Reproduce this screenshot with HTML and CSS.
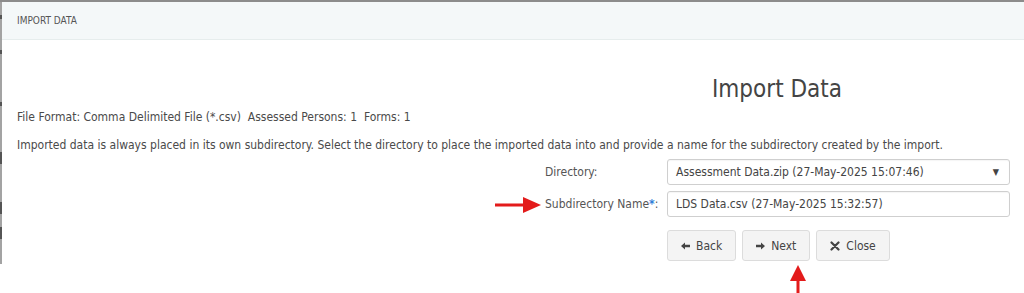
FILE: index.html
```html
<!DOCTYPE html>
<html>
<head>
<meta charset="utf-8">
<link rel="stylesheet" href="styles.css">
</head>
<body>
<div class="screen">
  <div class="edge">
    <span class="mark m1"></span><span class="mark m2"></span><span class="mark m3"></span><span class="mark m4"></span><span class="mark m5"></span><span class="mark m6"></span>
  </div>
  <div class="dialog">
    <div class="dlg-header">IMPORT DATA</div>
    <div class="dlg-body">
      <div class="title">Import Data</div>
      <p class="info">File Format: Comma Delimited File (*.csv)&nbsp; Assessed Persons: 1&nbsp; Forms: 1</p>
      <p class="desc">Imported data is always placed in its own subdirectory. Select the directory to place the imported data into and provide a name for the subdirectory created by the import.</p>
      <div class="form">
        <label class="lbl">Directory:</label>
        <div class="field select">
          <span>Assessment Data.zip (27-May-2025 15:07:46)</span>
          <span class="caret">▼</span>
        </div>
        <label class="lbl subdir">Subdirectory Name<span class="req">*</span>:
          <svg class="red-arrow-right" width="46" height="16" viewBox="0 0 46 16"><rect x="0" y="6.5" width="30" height="3" fill="#e31b1b"/><polygon points="28,0 46,8 28,16" fill="#e31b1b"/></svg>
        </label>
        <div class="field">LDS Data.csv (27-May-2025 15:32:57)</div>
        <div class="buttons">
          <button class="btn"><svg width="9" height="8" viewBox="0 0 9 8"><polygon points="0,4 4,0.5 4,2.8 9,2.8 9,5.2 4,5.2 4,7.5" fill="#444"/></svg>Back</button>
          <button class="btn next"><svg width="9" height="8" viewBox="0 0 9 8"><polygon points="9,4 5,0.5 5,2.8 0,2.8 0,5.2 5,5.2 5,7.5" fill="#444"/></svg>Next
            <svg class="red-arrow-up" width="16" height="30" viewBox="0 0 16 30"><polygon points="8,0 16,16 0,16" fill="#e31b1b"/><rect x="6.5" y="14" width="3" height="16" fill="#e31b1b"/></svg>
          </button>
          <button class="btn"><svg width="10" height="10" viewBox="0 0 10 10"><path d="M1.5 1.5 L8.5 8.5 M8.5 1.5 L1.5 8.5" stroke="#444" stroke-width="2.2" stroke-linecap="round"/></svg>Close</button>
        </div>
      </div>
    </div>
  </div>
</div>
</body>
</html>
```

FILE: styles.css
```css
html, body {
  margin: 0;
  padding: 0;
  background: #ffffff;
}
body {
  font-family: "DejaVu Sans Condensed", "DejaVu Sans", sans-serif;
  color: #4a4a4a;
  width: 1024px;
  height: 293px;
  overflow: hidden;
}
.screen {
  display: flex;
  border-top: 2px solid #8c8c8c;
}
.edge {
  flex: 0 0 2px;
  width: 2px;
  height: 262px;
  background: #a3a3a3;
  position: relative;
}
.mark {
  position: absolute;
  left: 0;
  width: 2px;
  background: #555;
}
.m1 { top: 13px; height: 4px; }
.m2 { top: 48px; height: 4px; }
.m3 { top: 100px; height: 4px; }
.m4 { top: 150px; height: 12px; }
.m5 { top: 200px; height: 12px; }
.m6 { top: 225px; height: 12px; }
.dialog {
  flex: 1;
  background: #fff;
  height: 262px;
}
.dlg-header {
  height: 37px;
  background: #f4f8f9;
  border-bottom: 1px solid #e6eded;
  font-size: 10px;
  line-height: 38px;
  padding-left: 15px;
  color: #555;
}
.dlg-body {
  padding: 0 12px 0 15px;
}
.title {
  margin-top: 35px;
  margin-left: 500px;
  width: 520px;
  text-align: center;
  font-size: 24px;
  line-height: 28px;
  color: #444;
}
.info, .desc {
  margin: 0;
  font-size: 12px;
  line-height: 16px;
}
.info { margin-top: 6px; }
.desc { margin-top: 12px; }
.form {
  margin-top: 6px;
  margin-left: 528px;
  display: grid;
  grid-template-columns: 122px 343px;
  row-gap: 6px;
  align-items: center;
}
.lbl {
  font-size: 12px;
  color: #555;
  position: relative;
}
.req { color: #2f7fd8; font-weight: bold; }
.field {
  height: 24px;
  border: 1px solid #cfcfcf;
  border-radius: 3px;
  box-sizing: content-box;
  display: flex;
  align-items: center;
  padding: 0 8px;
  font-size: 12px;
  color: #444;
  box-shadow: inset 0 1px 1px rgba(0,0,0,0.04);
  width: 325px;
}
.select { justify-content: space-between; }
.caret { font-size: 9px; color: #444; padding-right: 2px; }
.red-arrow-right {
  position: absolute;
  left: -50px;
  top: 0px;
}
.buttons {
  grid-column: 2;
  margin-top: 7px;
  display: flex;
  gap: 6px;
}
.btn {
  height: 31px;
  padding: 0 13px;
  background: #f4f4f4;
  border: 1px solid #dcdcdc;
  border-radius: 3px;
  font-family: inherit;
  font-size: 12px;
  color: #444;
  display: flex;
  align-items: center;
  gap: 6px;
  position: relative;
}
.red-arrow-up {
  position: absolute;
  left: 47px;
  top: 34px;
}
```
